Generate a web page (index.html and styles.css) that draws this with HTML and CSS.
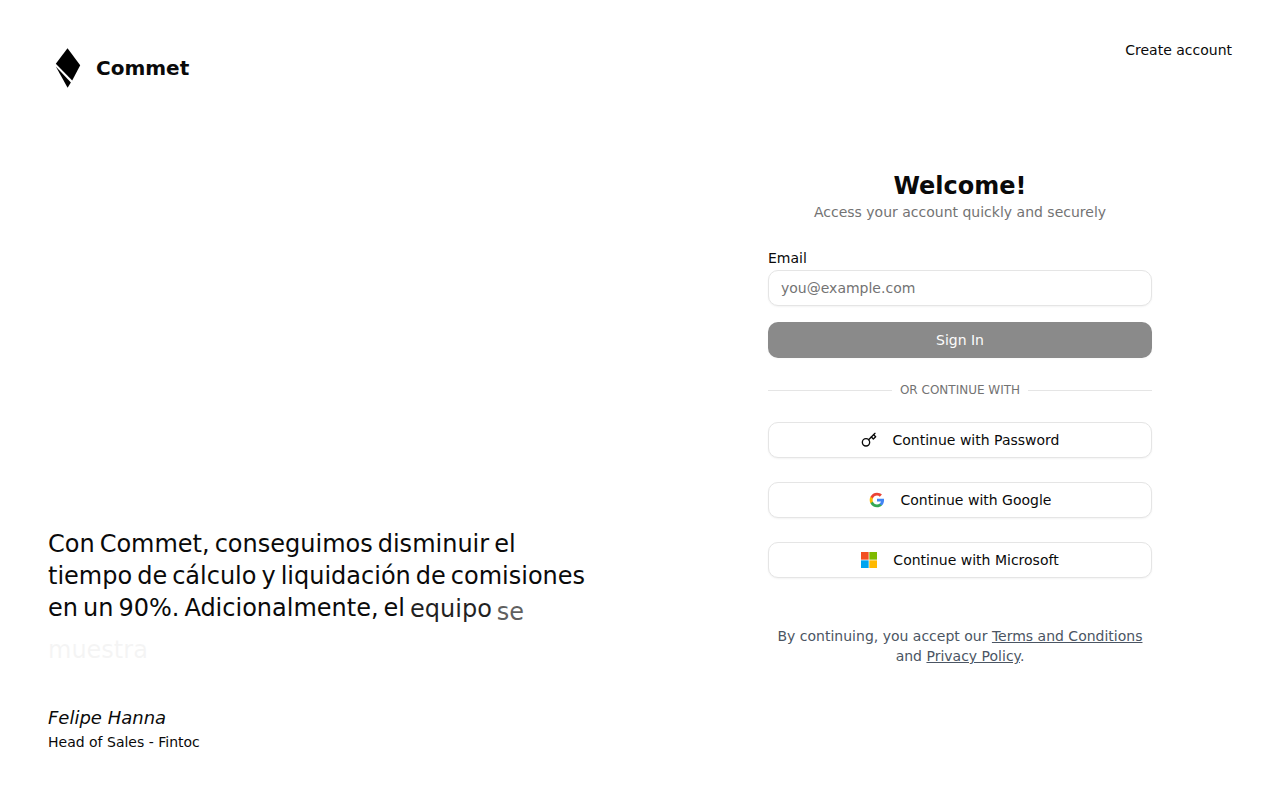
FILE: index.html
```html
<!DOCTYPE html>
<html lang="en">
    <head>
        <meta charset="UTF-8" />
        <meta name="viewport" content="width=device-width, initial-scale=1.0" />
        <title>Commet - Sign In</title>
        <link rel="stylesheet" href="styles.css">
    </head>
    <body>
        <div class="page">
            <aside class="intro">
                <div class="brand">
                    <svg class="brand-logo" viewBox="0 0 40 40" aria-hidden="true">
                        <path d="M19.5 0.3 32.2 17.2 24.2 32.6 7.8 15.8Z" />
                        <path d="M7.8 18.4 22.9 34.4 19.6 39.8Z" />
                    </svg>
                    <span>Commet</span>
                </div>

                <div class="testimonial">
                    <p class="quote" lang="es">
                        <span>Con</span>
                        <span>Commet,</span>
                        <span>conseguimos</span>
                        <span>disminuir</span>
                        <span>el</span>
                        <span>tiempo</span>
                        <span>de</span>
                        <span>cálculo</span>
                        <span>y</span>
                        <span>liquidación</span>
                        <span>de</span>
                        <span>comisiones</span>
                        <span>en</span>
                        <span>un</span>
                        <span>90%.</span>
                        <span>Adicionalmente,</span>
                        <span>el</span>
                        <span class="word-settling">equipo</span>
                        <span class="word-rising">se</span>
                        <span class="word-entering">muestra</span>
                    </p>
                    <p class="author">Felipe Hanna</p>
                    <p class="role">Head of Sales - Fintoc</p>
                </div>
            </aside>

            <main class="login">
                <a class="create-account" href="#">Create account</a>

                <div class="login-body">
                    <div class="login-content">
                        <header>
                            <h1>Welcome!</h1>
                            <p class="subtitle">Access your account quickly and securely</p>
                        </header>

                        <form class="email-form">
                            <label for="email">Email</label>
                            <input type="email" id="email" placeholder="you@example.com" />
                            <button class="submit" type="submit" disabled>Sign In</button>
                        </form>

                        <div class="divider">Or continue with</div>

                        <div class="providers">
                            <button type="button">
                                <svg class="key-icon" viewBox="0 0 24 24" aria-hidden="true">
                                    <circle cx="7.5" cy="15.5" r="5.5" />
                                    <path d="M21 2l-9.6 9.6" />
                                    <path d="M15.5 7.5l3 3L22 7l-3-3" />
                                </svg>
                                Continue with Password
                            </button>
                            <button type="button">
                                <svg viewBox="0 0 24 24" aria-hidden="true">
                                    <path fill="#4285f4" d="M22.56 12.25c0-.78-.07-1.53-.2-2.25H12v4.26h5.92c-.26 1.37-1.04 2.53-2.21 3.31v2.77h3.57c2.08-1.92 3.28-4.74 3.28-8.09z" />
                                    <path fill="#34a853" d="M12 23c2.97 0 5.46-.98 7.28-2.66l-3.57-2.77c-.98.66-2.23 1.06-3.71 1.06-2.86 0-5.29-1.93-6.16-4.53H2.18v2.84C3.99 20.53 7.7 23 12 23z" />
                                    <path fill="#fbbc05" d="M5.84 14.09c-.22-.66-.35-1.36-.35-2.09s.13-1.43.35-2.09V7.07H2.18C1.43 8.55 1 10.22 1 12s.43 3.45 1.18 4.93l3.66-2.84z" />
                                    <path fill="#ea4335" d="M12 5.38c1.62 0 3.06.56 4.21 1.64l3.15-3.15C17.45 2.09 14.97 1 12 1 7.7 1 3.99 3.47 2.18 7.07l3.66 2.84c.87-2.6 3.3-4.53 6.16-4.53z" />
                                </svg>
                                Continue with Google
                            </button>
                            <button type="button">
                                <svg viewBox="0 0 23 23" aria-hidden="true">
                                    <path fill="#f25022" d="M0 0h11v11H0z" />
                                    <path fill="#7fba00" d="M12 0h11v11H12z" />
                                    <path fill="#00a4ef" d="M0 12h11v11H0z" />
                                    <path fill="#ffb900" d="M12 12h11v11H12z" />
                                </svg>
                                Continue with Microsoft
                            </button>
                        </div>

                        <p class="legal">
                            By continuing, you accept our
                            <a href="#">Terms and Conditions</a> and
                            <a href="#">Privacy Policy</a>.
                        </p>
                    </div>
                </div>
            </main>
        </div>
    </body>
</html>
```
FILE: styles.css
```css
* {
    box-sizing: border-box;
}

body {
    font-family: "DejaVu Sans", sans-serif;
    font-size: 14px;
    line-height: 20px;
    margin: 0;
    background-color: #fff;
    color: #0a0a0a;
}

h1,
p {
    margin: 0;
}

a {
    color: inherit;
}

.page {
    display: grid;
    grid-template-columns: 1fr 1fr;
    min-height: 100vh;
}

/* Left side */
.intro {
    display: flex;
    flex-direction: column;
    justify-content: space-between;
    padding: 48px;
}

.brand {
    display: flex;
    align-items: center;
    gap: 8px;
    font-size: 20px;
    font-weight: bold;
}

.brand-logo {
    width: 40px;
    height: 40px;
    fill: #000;
}

.quote {
    display: flex;
    flex-wrap: wrap;
    column-gap: 5px;
    margin-bottom: 48px;
    font-size: 24px;
    line-height: 32px;
}

.word-settling {
    opacity: 0.9;
    transform: translateY(1px);
}

.word-rising {
    opacity: 0.65;
    transform: translateY(4px);
}

.word-entering {
    opacity: 0.04;
    transform: translateY(10px);
}

.author {
    font-size: 18px;
    font-style: italic;
    line-height: 28px;
}

/* Right side */
.login {
    display: flex;
    flex-direction: column;
    padding: 32px 48px;
}

.create-account {
    align-self: flex-end;
    padding: 8px 0;
    text-decoration: none;
}

.login-body {
    display: flex;
    flex: 1;
    align-items: center;
    justify-content: center;
}

.login-content {
    display: flex;
    flex-direction: column;
    gap: 24px;
    width: 100%;
    max-width: 384px;
}

h1 {
    font-size: 24px;
    line-height: 32px;
    text-align: center;
}

.subtitle {
    color: #737373;
    text-align: center;
}

.email-form {
    display: flex;
    flex-direction: column;
}

.email-form label {
    line-height: 24px;
}

.email-form input,
.email-form button,
.providers button {
    width: 100%;
    height: 36px;
    font: inherit;
    border: 1px solid #e5e5e5;
    border-radius: 10px;
    background-color: #fff;
    color: inherit;
    box-shadow: 0 1px 2px rgba(0, 0, 0, 0.05);
}

.email-form input {
    padding: 0 12px;
}

.email-form input::placeholder {
    color: #737373;
}

.email-form .submit {
    margin-top: 16px;
    border: none;
    background-color: #171717;
    color: #fafafa;
    opacity: 0.5;
}

.divider {
    display: flex;
    align-items: center;
    gap: 8px;
    font-size: 12px;
    line-height: 16px;
    text-transform: uppercase;
    color: #737373;
}

.divider::before,
.divider::after {
    content: "";
    flex: 1;
    border-top: 1px solid #e5e5e5;
}

.providers {
    display: flex;
    flex-direction: column;
    gap: 24px;
}

.providers button {
    display: flex;
    align-items: center;
    justify-content: center;
    gap: 16px;
    cursor: pointer;
}

.providers svg {
    width: 16px;
    height: 16px;
}

.key-icon {
    fill: none;
    stroke: currentColor;
    stroke-width: 2;
    stroke-linecap: round;
    stroke-linejoin: round;
}

.legal {
    margin-top: 24px;
    color: #4b5563;
    text-align: center;
}
```
